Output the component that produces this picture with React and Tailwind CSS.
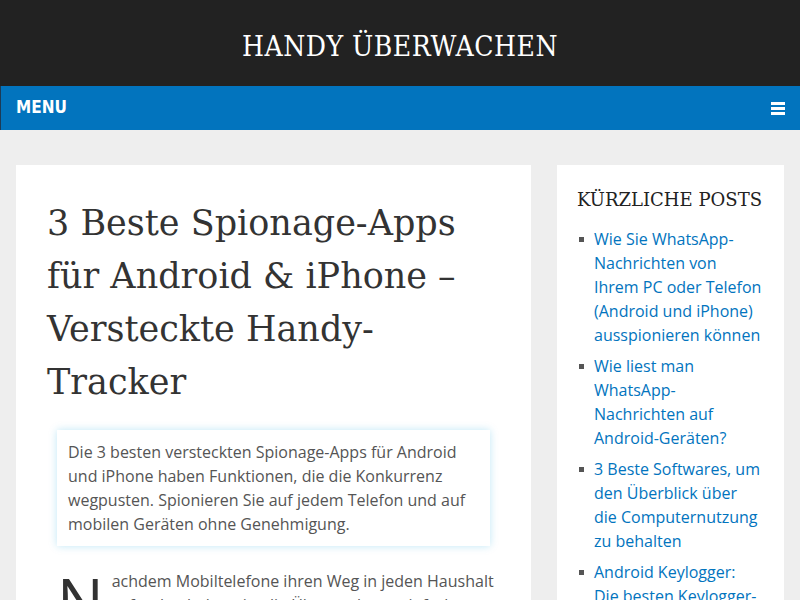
const posts = [
  "Wie Sie WhatsApp-Nachrichten von Ihrem PC oder Telefon (Android und iPhone) ausspionieren können",
  "Wie liest man WhatsApp-Nachrichten auf Android-Geräten?",
  "3 Beste Softwares, um den Überblick über die Computernutzung zu behalten",
  "Android Keylogger: Die besten Keylogger-Apps für Android",
];

export default function App() {
  return (
    <div className="min-h-screen bg-[#eeeeee] font-['Open_Sans',sans-serif]">
      {/* HEADER */}
      <header className="bg-[#222222] h-[86px] pt-[8px] flex items-center justify-center">
        <h1 className="text-white text-[28px] tracking-[0.5px] font-['DejaVu_Serif',serif] [font-stretch:condensed]">
          HANDY ÜBERWACHEN
        </h1>
      </header>

      {/* NAV */}
      <nav className="bg-[#0274be] h-[44px] border-l border-[#1c3b57] flex items-center justify-between pl-[15px] pr-[15px]">
        <span className="text-white font-bold text-[17px] font-['DejaVu_Sans',sans-serif] [font-stretch:condensed]">MENU</span>
        <div className="flex flex-col gap-[2px] w-[14px]">
          <span className="h-[3px] bg-white" />
          <span className="h-[3px] bg-white" />
          <span className="h-[3px] bg-white" />
        </div>
      </nav>

      {/* CONTENT */}
      <div className="flex gap-[26px] px-4 pt-[35px] items-start">
        <main className="bg-white w-[515px] h-[460px] overflow-hidden pl-[31px] pr-[31px] pt-[32px]">
          <h2 className="text-[#333] text-[35px] leading-[53px] mr-[5px] font-['DejaVu_Serif',serif]">
            3 Beste Spionage-Apps für Android &amp; iPhone – Versteckte Handy-Tracker
          </h2>

          <div className="mt-[21px] ml-[10px] mr-[10px] px-[11px] py-[10px] bg-white shadow-[0_0_8px_rgba(2,160,220,0.25)] text-[#555] text-[16px] leading-[24px]">
            Die 3 besten versteckten Spionage-Apps für Android und iPhone haben Funktionen, die die Konkurrenz wegpusten. Spionieren Sie auf jedem Telefon und auf mobilen Geräten ohne Genehmigung.
          </div>

          <p className="mt-[23px] ml-[10px] text-[#555] text-[16px] leading-[24px]">
            <span className="float-left text-[62px] leading-[54px] mr-[8px] mt-[4px] text-[#333]">N</span>
            achdem Mobiltelefone ihren Weg in jeden Haushalt gefunden haben, ist die Überwachung einfacher geworden.
          </p>
        </main>

        <aside className="bg-white w-[227px] h-[460px] overflow-hidden pl-[20px] pr-[22px] pt-[22px]">
          <h3 className="text-[#222] text-[18px] leading-[26px] font-['DejaVu_Serif',serif]">
            KÜRZLICHE POSTS
          </h3>
          <ul className="mt-[14px] flex flex-col gap-[7px]">
            {posts.map((p) => (
              <li key={p} className="flex">
                <span className="w-[5px] h-[5px] bg-[#555] mt-[10px] ml-[2px] mr-[10px] shrink-0" />
                <a href="#" className="text-[#0274be] text-[16px] leading-[24px]">{p}</a>
              </li>
            ))}
          </ul>
        </aside>
      </div>
    </div>
  );
}
